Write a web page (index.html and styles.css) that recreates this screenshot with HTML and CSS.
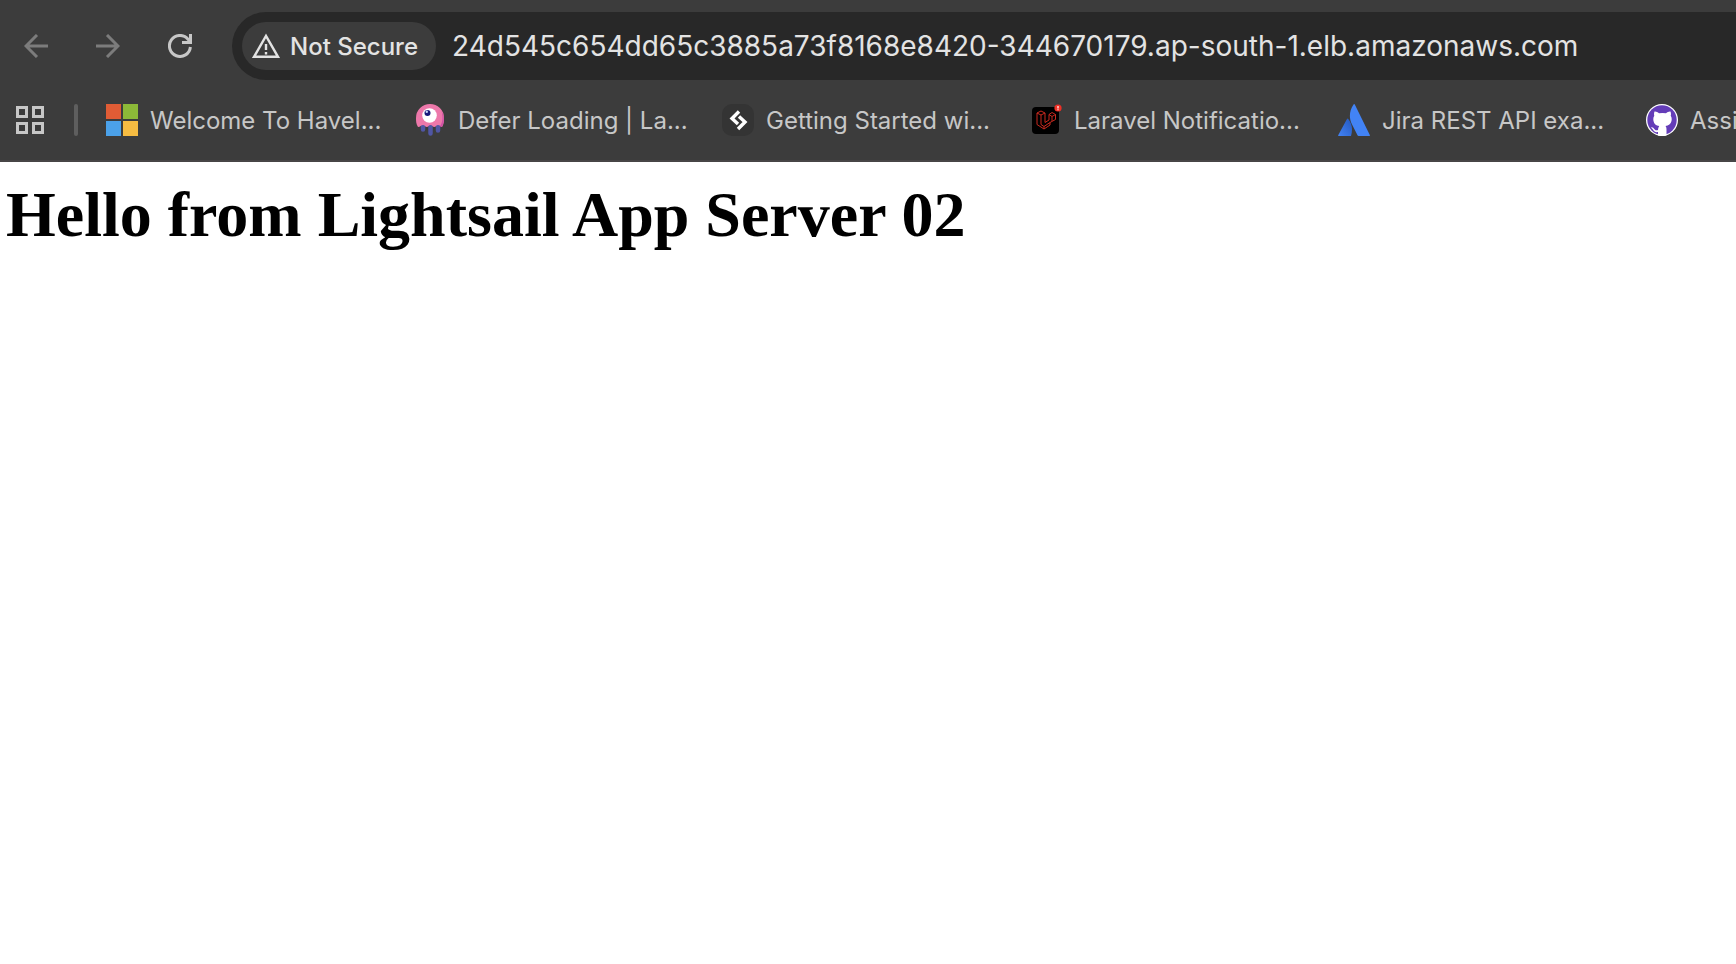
FILE: index.html
```html
<!DOCTYPE html>
<html lang="en">
<head>
  <meta charset="UTF-8" />
  <meta name="viewport" content="width=device-width, initial-scale=1.0" />
  <title>Hello from Lightsail App Server 02</title>
  <link rel="stylesheet" href="styles.css">
</head>
<body>
  <header class="browser">
    <!-- Navigation and address bar -->
    <div class="toolbar">
      <div class="nav-buttons">
        <button type="button" class="icon-button dim" aria-label="Back">
          <svg width="24" height="24" viewBox="0 0 24 24" fill="none" stroke="currentColor" stroke-width="3"><path d="M24 12H2M13 1 2 12l11 11" /></svg>
        </button>
        <button type="button" class="icon-button dim" aria-label="Forward">
          <svg width="24" height="24" viewBox="0 0 24 24" fill="none" stroke="currentColor" stroke-width="3"><path d="M0 12h22M11 1l11 11-11 11" /></svg>
        </button>
        <button type="button" class="icon-button" aria-label="Reload">
          <svg width="24" height="24" viewBox="0 0 24 24" fill="none" stroke="currentColor" stroke-width="3"><path d="M22.4 13A10.5 10.5 0 1 1 20 5.2l2 2.8M22.5 0v8.5H14" /></svg>
        </button>
      </div>
      <div class="omnibox">
        <button type="button" class="security-chip">
          <svg width="30" height="26" viewBox="0 0 30 26" fill="none" stroke="currentColor" stroke-width="2.4"><path d="M2 23.8 14 3l12 20.800z" /><path d="M14 11v6M14 19v2.500" /></svg>
          Not Secure
        </button>
        <input type="text" class="address" aria-label="Address" value="24d545c654dd65c3885a73f8168e8420-344670179.ap-south-1.elb.amazonaws.com" />
      </div>
    </div>

    <!-- Bookmarks bar -->
    <nav class="bookmarks">
      <button type="button" class="icon-button" aria-label="Apps">
        <svg width="28" height="28" viewBox="0 0 28 28" fill="none" stroke="currentColor" stroke-width="3"><path d="M1.5 1.5h9v9h-9zM17.5 1.5h9v9h-9zM1.5 17.5h9v9h-9zM17.5 17.5h9v9h-9z" /></svg>
      </button>
      <span class="divider"></span>
      <a href="#" class="bookmark">
        <svg class="favicon" viewBox="0 0 32 32"><path fill="#e05c35" d="M0 0h15v15H0z" /><path fill="#8cb938" d="M17 0h15v15H17z" /><path fill="#4ba1e9" d="M0 17h15v15H0z" /><path fill="#f6bc42" d="M17 17h15v15H17z" /></svg>
        <span>Welcome To Havel...</span>
      </a>
      <a href="#" class="bookmark">
        <svg class="favicon" viewBox="0 0 32 32">
          <path stroke="#5056a4" stroke-width="4.500" stroke-linecap="round" d="M9 22v3.500M16.500 22v7.500M24 22v4.500" />
          <path fill="#ed78aa" d="M4 23C2 20 2 17 2 14a14 14 0 0 1 28 0c0 3 0 6-2 9-1.500 0-2-2-4-2s-2 2-3.700 2-1.800-2-3.800-2-2 2-3.700 2-1.800-2-3.800-2-2.500 2-5 2z" />
          <path fill="#d050a5" d="M27.500 7c3 5 3 11 .5 16-1 0-1.500-.5-2-1 3-4 3-9 1.500-15z" />
          <circle cx="15.500" cy="11.500" r="7.300" fill="#fff" /><circle cx="13.500" cy="9" r="3" fill="#18187a" /><circle cx="12.800" cy="7.800" r="1.200" fill="#c8d8f8" />
        </svg>
        <span>Defer Loading | La...</span>
      </a>
      <a href="#" class="bookmark">
        <svg class="favicon" viewBox="0 0 32 32"><rect width="32" height="32" rx="10" fill="#343434" /><path fill="none" stroke="#fff" stroke-width="3.400" d="M17 7.500l-7 7 6 5.500M16 25l7-7-6-5.500" /></svg>
        <span>Getting Started wi...</span>
      </a>
      <a href="#" class="bookmark">
        <svg class="favicon" viewBox="-2 0 32 32">
          <rect y="3" width="27" height="27" rx="4" fill="#000" />
          <path fill="none" stroke="#c8291f" stroke-width="1" stroke-linejoin="round" d="M5 9 9 7l4 2v9.500l4-2.500v-5.500l3-2 3.500 2v5L18 18.500V21l-6 4-7-4.500zM5 9l4 2 4-2M9 11v9.500l3 2 6-4M17 10.500l3 2 3.500-2M20 12.500v4.500M12 22.500V25" />
          <circle cx="26" cy="4" r="3.600" fill="#ef3026" /><path stroke="#fff" stroke-width="1.200" d="M26 2v2.500M26 5.300v1" />
        </svg>
        <span>Laravel Notificatio...</span>
      </a>
      <a href="#" class="bookmark">
        <svg class="favicon" viewBox="0 0 32 32">
          <defs><linearGradient id="peak" x1="1" y1="0" x2="0" y2="1"><stop offset="0" stop-color="#2457bd" /><stop offset="1" stop-color="#4283f5" /></linearGradient></defs>
          <path fill="url(#peak)" d="M9 15q.7-1 1.300 0c4 5 4.500 11 2.700 17H1q-1.200 0-.7-1z" />
          <path fill="#4283f5" d="M15.500.5q.7-1 1.300 0L31.800 31q.4 1-.7 1H20.500q-.7 0-1-.7L13.800 20c-3-6.500-2.500-13 1.700-19.500z" />
        </svg>
        <span>Jira REST API exa...</span>
      </a>
      <a href="#" class="bookmark">
        <svg class="favicon" viewBox="0 0 32 32">
          <circle cx="16" cy="16" r="16" fill="#fff" /><circle cx="16" cy="16" r="14.700" fill="#643db8" />
          <path fill="#fff" d="M8.500 7.500c1.500-.3 3 .6 4.500 1.700q3.500-.6 7 0c1.500-1.100 3-2 4.500-1.700.6 1.500.6 3 .2 4.300 1 1.500 1.200 3 .8 5.200-.6 3-3 4.500-6 5 .8 1 1 2 1 3.500v6q-4.500 1-8.500 0v-3.500c-4 .8-4.500-2-6-3.500l-1-1q2-.6 3.300 1.500c1 1.500 2.200 1.400 3.700 1 0-1.500.4-2.700 1.200-4-3.200-.5-5.200-2-5.700-5-.4-2.200-.2-3.700.8-5.200-.4-1.300-.4-2.800.2-4.300z" />
        </svg>
        <span>Assi</span>
      </a>
    </nav>
  </header>

  <main class="page">
    <h1>Hello from Lightsail App Server 02</h1>
  </main>
</body>
</html>
```
FILE: styles.css
```css
* {
  box-sizing: border-box;
}

body {
  margin: 0;
  background: #fff;
}

button,
input {
  font: inherit;
  color: inherit;
  background: none;
  border: none;
  padding: 0;
}

.browser {
  font-family: Inter, "Liberation Sans", sans-serif;
  font-size: 24px;
  color: #c7c7c7;
  background-color: #3c3c3c;
  border-bottom: 2px solid #474546;
}

.toolbar {
  display: flex;
  align-items: center;
  padding-top: 12px;
}

.nav-buttons {
  display: flex;
  gap: 48px;
  padding: 0 40px 0 24px;
}

.icon-button {
  display: flex;
}

.dim {
  color: #7c7c7c;
}

.omnibox {
  flex: 1;
  display: flex;
  align-items: center;
  gap: 16px;
  height: 68px;
  padding-left: 10px;
  background-color: #282828;
  border-radius: 34px 0 0 34px;
  color: #e3e3e3;
}

.security-chip {
  display: flex;
  align-items: center;
  gap: 8px;
  height: 48px;
  padding: 0 18px 0 10px;
  border-radius: 24px;
  background-color: #3c3c3c;
  font-weight: 500;
  white-space: nowrap;
}

.address {
  flex: 1;
  min-width: 0;
  font-size: 28px;
}

.bookmarks {
  display: grid;
  grid-template-columns: 28px 62px repeat(5, 308px) 1fr;
  align-items: center;
  height: 80px;
  padding-left: 16px;
}

.divider {
  width: 4px;
  height: 32px;
  margin-left: 30px;
  border-radius: 2px;
  background-color: #5e5e5e;
}

.bookmark {
  display: flex;
  align-items: center;
  gap: 12px;
  color: inherit;
  text-decoration: none;
  white-space: nowrap;
}

.favicon {
  flex-shrink: 0;
  width: 32px;
  height: 32px;
}

.page {
  padding: 16px 6px;
}

h1 {
  margin: 0;
  font-family: "Liberation Serif", serif;
  font-size: 64px;
  line-height: 74px;
  color: #000;
}
```
